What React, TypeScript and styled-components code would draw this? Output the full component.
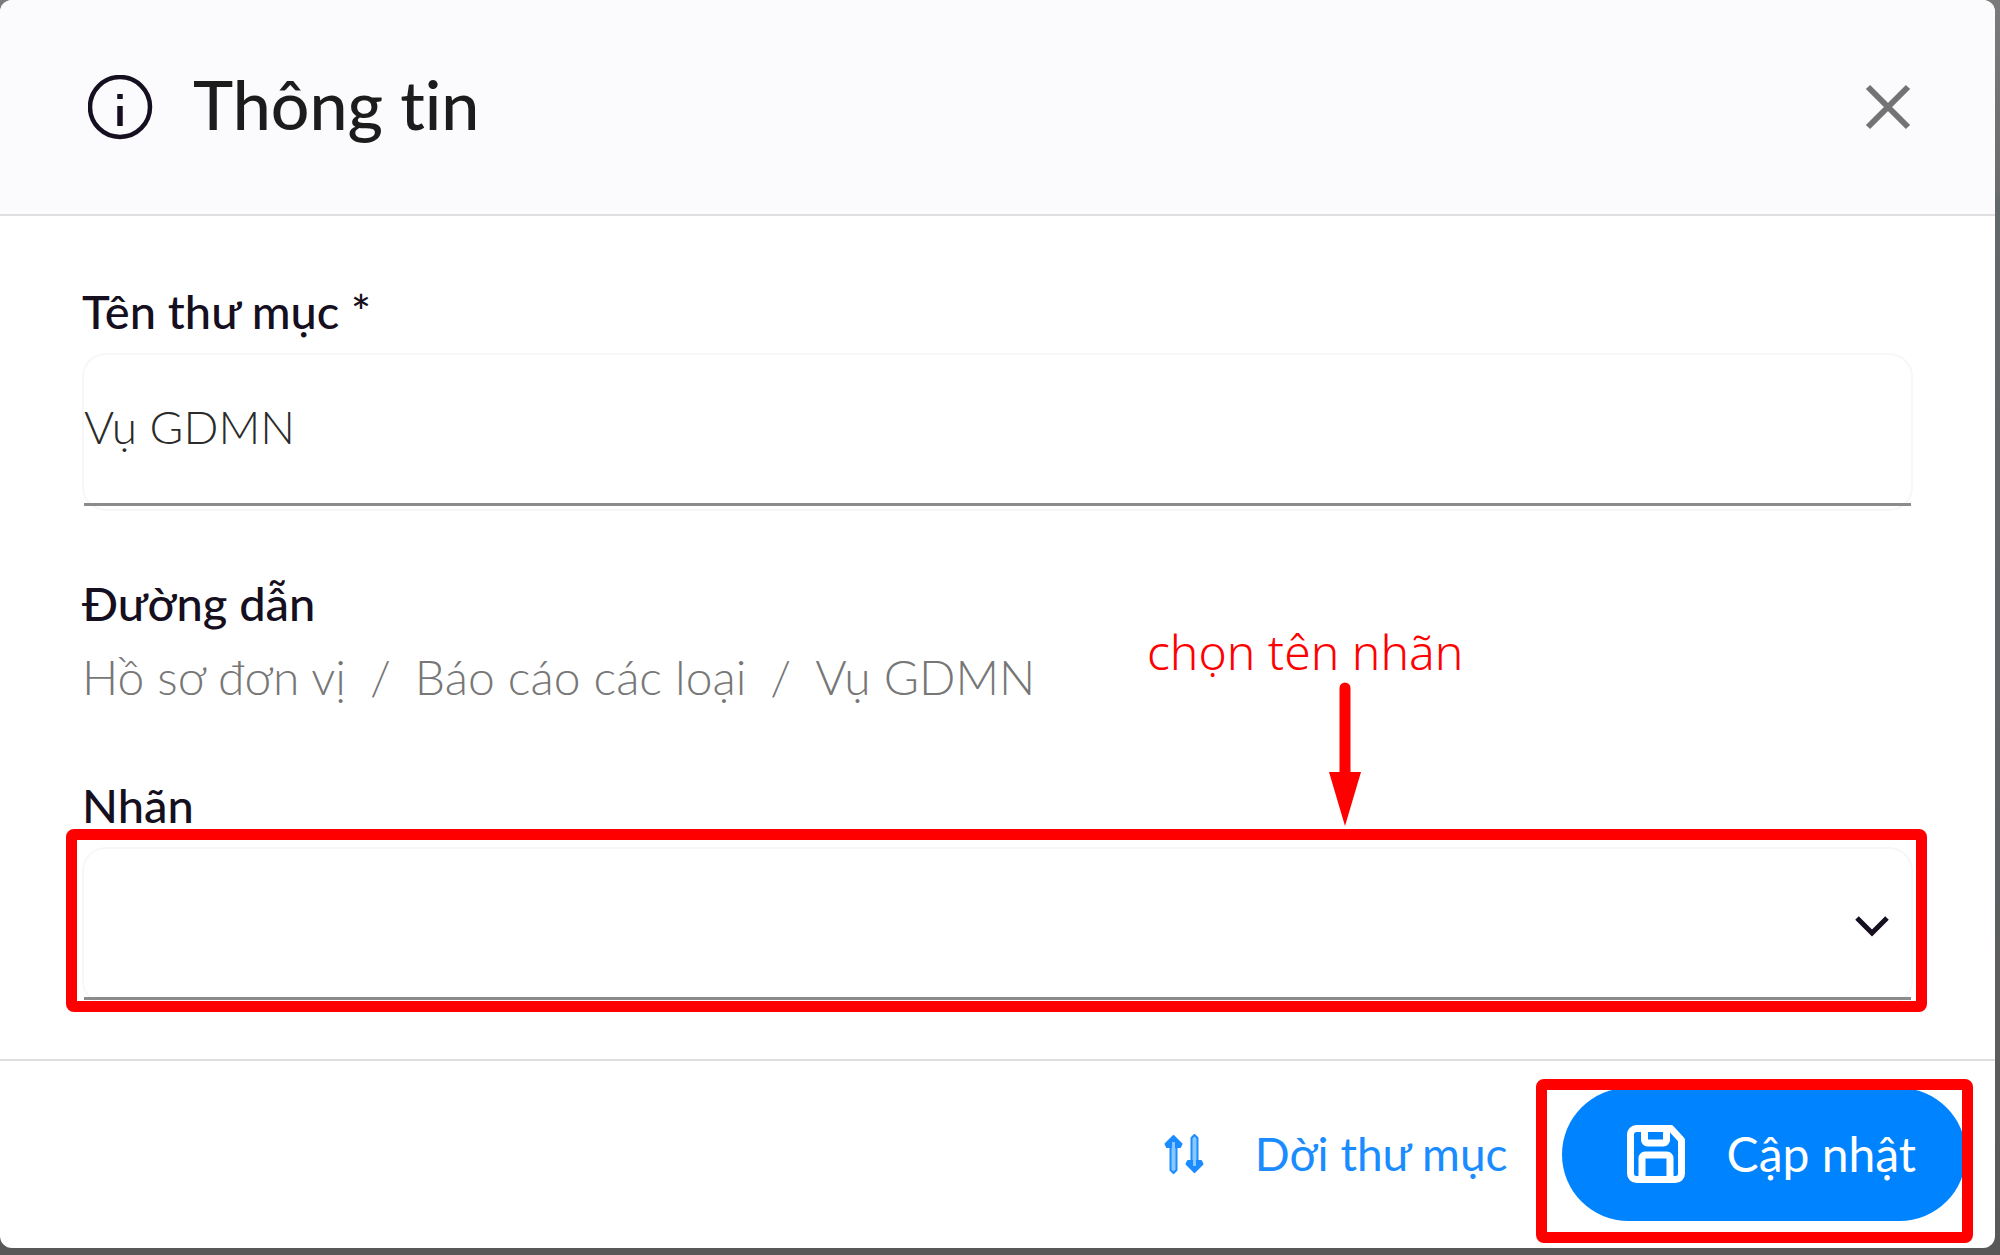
import React, { useState } from "react";
import styled, { createGlobalStyle } from "styled-components";

const GlobalStyle = createGlobalStyle`
  *, *::before, *::after { box-sizing: border-box; }
  body {
    margin: 0;
    min-height: 100vh;
    background: linear-gradient(180deg, #7a7a7a 0, #6b6b6b 190px, #62676b 200px, #5e6264 60%, #585858 100%);
    font-family: Lato, "Open Sans", sans-serif;
    font-variant-ligatures: none;
  }
  button, input, select { font: inherit; }
`;

const Dialog = styled.div`
  margin: 0 5px 0 0;
  background: #ffffff;
  border-radius: 12px;
`;

const Backdrop = styled.div`
  padding-bottom: 7px;
`;

const Header = styled.header`
  display: flex;
  align-items: center;
  gap: 40px;
  height: 216px;
  padding: 0 84px 0 88px;
  background: #fbfbfd;
  border-bottom: 2px solid #dfdfdf;
  border-radius: 12px 12px 0 0;
`;

const Title = styled.h1`
  flex: 1;
  margin: 0;
  padding-bottom: 6px;
  color: #1c1c1c;
  font-size: 68px;
  line-height: 84px;
  font-weight: 500;
`;

const IconButton = styled.button`
  display: flex;
  padding: 0;
  border: 0;
  background: none;
  color: #737373;
  cursor: pointer;
`;

const Form = styled.form`
  display: flex;
  flex-direction: column;
  gap: 62px;
  padding: 65px 82px 54px;
`;

const Group = styled.div`
  display: flex;
  flex-direction: column;
  gap: 12px;
`;

const Label = styled.label`
  color: #150f20;
  font-size: 47px;
  line-height: 60px;
  font-weight: 500;
`;

const Field = styled.div`
  position: relative;
  display: flex;
  height: 158px;
  padding-bottom: 3px;
  border: 2px solid #f7f7fa;
  border-radius: 24px;
`;

const controlStyles = `
  flex: 1;
  min-width: 0;
  padding: 0 0 6px;
  border: 0;
  border-bottom: 3px solid #8b8b8b;
  border-radius: 0;
  outline: 0;
  background: transparent;
  color: #2b2b2b;
  font-size: 46px;
  font-weight: 300;
`;

const TextInput = styled.input`
  ${controlStyles}
`;

const SelectInput = styled.select`
  ${controlStyles}
  appearance: none;
`;

const SelectArrow = styled.svg`
  position: absolute;
  right: 22px;
  top: 66px;
  pointer-events: none;
`;

const Crumbs = styled.nav`
  display: flex;
  gap: 24px;
  padding: 2px 0 6px;
  color: #777777;
  font-size: 48px;
  line-height: 60px;
  font-weight: 300;
`;

const Highlight = styled.div<{ $inset: string }>`
  position: absolute;
  inset: ${(p) => p.$inset};
  border: 11px solid #ff0000;
  border-radius: 8px;
  pointer-events: none;
`;

const Note = styled.div`
  position: absolute;
  left: 1063px;
  bottom: 177px;
  display: flex;
  flex-direction: column;
  color: #ff0000;
  font-family: "Noto Sans", "Open Sans", sans-serif;
  font-size: 48px;
  line-height: 60px;
  font-weight: 300;
  white-space: nowrap;
  pointer-events: none;

  svg {
    margin-left: 182px;
  }
`;

const Footer = styled.footer`
  display: flex;
  align-items: center;
  justify-content: flex-end;
  gap: 54px;
  padding: 27px 29px 27px;
  border-top: 2px solid #dfdfdf;
`;

const LinkButton = styled.button`
  display: flex;
  align-items: center;
  gap: 50px;
  padding: 0 0 2px;
  border: 0;
  background: none;
  color: #1a8cff;
  font-size: 46px;
  line-height: 60px;
  cursor: pointer;
`;

const PrimarySlot = styled.div`
  position: relative;
  display: flex;
`;

const PrimaryButton = styled.button`
  display: flex;
  align-items: center;
  gap: 42px;
  height: 133px;
  padding: 0 50px 2px 65px;
  border: 0;
  border-radius: 67px;
  background: #0083ff;
  color: #ffffff;
  font-size: 48px;
  line-height: 60px;
  cursor: pointer;
`;

const InfoIcon = () => (
  <svg width="65" height="65" viewBox="0 0 65 65" fill="none" stroke="#150f20" aria-hidden="true">
    <circle cx="32" cy="32" r="30" strokeWidth="4.5" />
    <path d="M32 31v20" strokeWidth="5.5" />
    <path d="M32 19v5" strokeWidth="5.5" />
  </svg>
);

const CloseIcon = () => (
  <svg width="46" height="46" viewBox="0 0 46 46" fill="none" stroke="currentColor" strokeWidth="6" aria-hidden="true">
    <path d="M3 3l40 40M43 3L3 43" />
  </svg>
);

const MoveIcon = () => (
  <svg width="42" height="40" viewBox="0 0 42 40" fill="#8ac6ff" stroke="#1a8cff" strokeWidth="2" strokeLinejoin="round" aria-hidden="true">
    <path d="M7.500 10v26l3 3 3-3V10z" />
    <path d="M10.500 2l8 8-1.500 3h-13l-1.500-3z" fill="#1a8cff" />
    <path d="M28.500 30V4l3-3 3 3v26z" />
    <path d="M31.500 38l-8-8 1.500-3h13l1.500 3z" fill="#1a8cff" />
    <path d="M10.500 8v28M31.500 4v28" stroke="#8ac6ff" strokeWidth="3" />
  </svg>
);

const SaveIcon = () => (
  <svg width="58" height="58" viewBox="0 0 58 58" fill="none" stroke="currentColor" strokeWidth="7" strokeLinejoin="round" aria-hidden="true">
    <path d="M9.500 3.500H44L54.500 15v33.500a6 6 0 0 1-6 6h-39a6 6 0 0 1-6-6v-39a6 6 0 0 1 6-6z" />
    <path d="M17.500 4v11a3 3 0 0 0 3 3h16a3 3 0 0 0 3-3V4" />
    <path d="M15 54V33a3 3 0 0 1 3-3h22a3 3 0 0 1 3 3v21" />
  </svg>
);

const ArrowDown = () => (
  <svg width="32" height="144" viewBox="0 0 32 144" fill="#ff0000" aria-hidden="true">
    <path d="M16 6v90" stroke="#ff0000" strokeWidth="11" strokeLinecap="round" />
    <path d="M0 90h32L16 144z" />
  </svg>
);

const path = ["Hồ sơ đơn vị", "Báo cáo các loại", "Vụ GDMN"];

export default function App() {
  const [name, setName] = useState("Vụ GDMN");

  return (
    <Backdrop>
      <GlobalStyle />
      <Dialog role="dialog" aria-labelledby="dialog-title">
        <Header>
          <InfoIcon />
          <Title id="dialog-title">Thông tin</Title>
          <IconButton type="button" aria-label="Đóng">
            <CloseIcon />
          </IconButton>
        </Header>
        <Form id="folder-form" onSubmit={(e) => e.preventDefault()}>
          <Group>
            <Label htmlFor="folder-name">Tên thư mục *</Label>
            <Field>
              <TextInput id="folder-name" value={name} onChange={(e) => setName(e.target.value)} />
            </Field>
          </Group>
          <Group>
            <Label as="div">Đường dẫn</Label>
            <Crumbs>
              {path.map((part, i) => (
                <React.Fragment key={part}>
                  {i > 0 && <span>/</span>}
                  <span>{part}</span>
                </React.Fragment>
              ))}
            </Crumbs>
          </Group>
          <Group>
            <Label htmlFor="folder-label">Nhãn</Label>
            <Field>
              <SelectInput id="folder-label" defaultValue="">
                <option value="" />
              </SelectInput>
              <SelectArrow width="34" height="22" viewBox="0 0 34 22" fill="none" stroke="#150f20" strokeWidth="5">
                <path d="M2 3l15 15L32 3" />
              </SelectArrow>
              <Highlight $inset="-20px -16px -9px -18px" />
              <Note>
                <span>chọn tên nhãn</span>
                <ArrowDown />
              </Note>
            </Field>
          </Group>
        </Form>
        <Footer>
          <LinkButton type="button">
            <MoveIcon />
            Dời thư mục
          </LinkButton>
          <PrimarySlot>
            <PrimaryButton type="submit" form="folder-form">
              <SaveIcon />
              Cập nhật
            </PrimaryButton>
            <Highlight $inset="-9px -7px -22px -26px" />
          </PrimarySlot>
        </Footer>
      </Dialog>
    </Backdrop>
  );
}
